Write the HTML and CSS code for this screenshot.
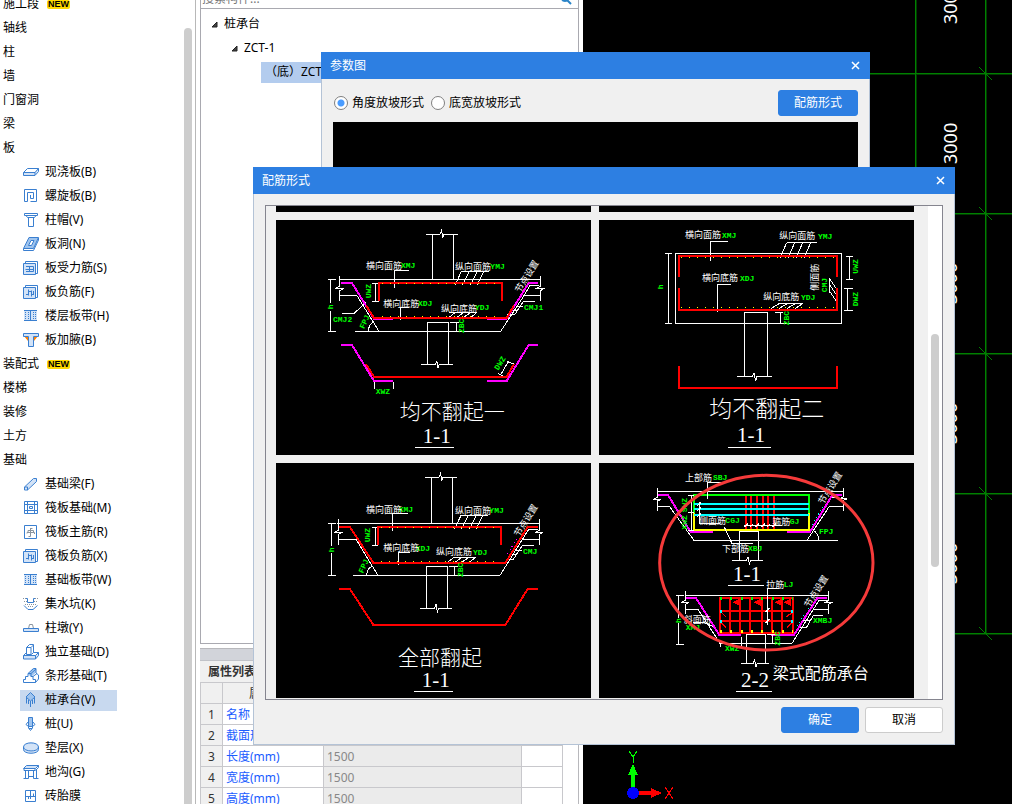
FILE: index.html
```html
<!DOCTYPE html>
<html lang="zh-CN">
<head>
    <meta charset="UTF-8">
    <meta name="viewport" content="width=device-width, initial-scale=1.0">
    <title>配筋形式</title>
    <link rel="stylesheet" href="styles.css">
</head>
<body>
    <div class="app">
        <nav class="sidebar">
            <ul class="nav-list">
                <li><a href="#">施工段</a><span class="badge">NEW</span></li>
                <li><a href="#">轴线</a></li>
                <li><a href="#">柱</a></li>
                <li><a href="#">墙</a></li>
                <li><a href="#">门窗洞</a></li>
                <li><a href="#">梁</a></li>
                <li><a href="#">板</a></li>
                <li class="sub"><a href="#"><svg class="icon" viewBox="0 0 16 16"><path class="fill" d="M1 8H12L15 4V7L12 11H1Z"/><path d="M.5 8.5 4.5 4.5H15.5V7.5L12 11.5H.5ZM.5 8.5H12L15.5 4.5M12 8.5V11"/></svg>现浇板(B)</a></li>
                <li class="sub"><a href="#"><svg class="icon" viewBox="0 0 16 16"><path d="M4.5 13.5H1.5V1.5H13.5V13.5H7.5M4.5 13.5V4.5H10.5V10.5H7.5V7"/></svg>螺旋板(B)</a></li>
                <li class="sub"><a href="#"><svg class="icon" viewBox="0 0 16 16"><path d="M1.5 1.5H14.5V3.5H1.5ZM3 3.5 4.5 5.5H11.5L13 3.5M5.5 5.5V14.5H10.5V5.5"/></svg>柱帽(V)</a></li>
                <li class="sub"><a href="#"><svg class="icon" viewBox="0 0 16 16"><path class="fill dark" d="M.5 12.5 6 1.5H15.5L10.5 12.5Z"/><path d="M.5 12.5 6 1.5H15.5L10.5 12.5ZM.5 12.5V14.5H10.5L15.5 4V2"/><path class="hole" d="M5.5 9.5 8 4.5H11L8.5 9.5Z"/></svg>板洞(N)</a></li>
                <li class="sub"><a href="#"><svg class="icon" viewBox="0 0 16 16"><path class="fill" d="M.5 3.5H12.5V14.5H.5Z"/><path d="M.5 3.5H12.5V14.5H.5ZM2.5 3V1.5H14.5V13.5H13M3 6.5H10.5V11.5H3M2.5 9.5H10M6.5 6.5V12"/></svg>板受力筋(S)</a></li>
                <li class="sub"><a href="#"><svg class="icon" viewBox="0 0 16 16"><path class="fill" d="M.5 3.5H12.5V14.5H.5Z"/><path d="M.5 3.5H12.5V14.5H.5ZM2.5 3V1.5H14.5V13.5H13M5.5 5.5V11.5M8.5 6.5V12.5M3 10.5H5M5 7.5H8M8 10.5H11M10.5 7V11"/></svg>板负筋(F)</a></li>
                <li class="sub"><a href="#"><svg class="icon" viewBox="0 0 16 16"><path class="fill" d="M1 3H14V13H1Z"/><path d="M1 2.5H14M1 12.5H14M7.5 3V12"/><path class="dots" d="M2.5 4V12M5.5 4V12M10.5 4V12M12.5 4V12"/></svg>楼层板带(H)</a></li>
                <li class="sub"><a href="#"><svg class="icon" viewBox="0 0 16 16"><path class="orange" d="M1 4H5V9ZM15 4H11V9Z"/><path class="fill" d="M.5 1.5H15.5V4.5H10.5V14.5H5.5V4.5H.5Z"/><path d="M.5 1.5H15.5V4.5H10.5V14.5H5.5V4.5H.5Z"/></svg>板加腋(B)</a></li>
                <li><a href="#">装配式</a><span class="badge">NEW</span></li>
                <li><a href="#">楼梯</a></li>
                <li><a href="#">装修</a></li>
                <li><a href="#">土方</a></li>
                <li><a href="#">基础</a></li>
                <li class="sub"><a href="#"><svg class="icon" viewBox="0 0 16 16"><path class="fill" d="M1.5 11.5 10.5 2.5H13.5V5.5L4.5 13.5H1.5Z"/><path d="M1.5 11 10.5 2.5H13.5V5.5L4.5 14H1.5ZM1.5 11H4.5V14"/></svg>基础梁(F)</a></li>
                <li class="sub"><a href="#"><svg class="icon" viewBox="0 0 16 16"><path d="M1.5 1.5H14.5V13.5H1.5ZM1.5 4.5H14.5M1.5 10.5H14.5M4.5 1.5V13.5M11.5 1.5V13.5M6.5 6.5H9.5V8.5H6.5Z"/></svg>筏板基础(M)</a></li>
                <li class="sub"><a href="#"><svg class="icon" viewBox="0 0 16 16"><path d="M1.5 1.5H13.5V14.5H1.5Z"/><path class="gray" d="M7.5 4V12.5M5 8V6.5H10.5V8M7.5 4.5H9.5M4 9.5V8.5H11.5V10M5.5 12.5H7.5"/></svg>筏板主筋(R)</a></li>
                <li class="sub"><a href="#"><svg class="icon" viewBox="0 0 16 16"><path class="fill" d="M.5 3.5H12.5V14.5H.5Z"/><path d="M.5 3.5H12.5V14.5H.5ZM2.5 3V1.5H14.5V13.5H13M5.5 5.5V11.5M8.5 6.5V12.5M3 10.5H5M5 7.5H8M8 10.5H11M10.5 7V11"/></svg>筏板负筋(X)</a></li>
                <li class="sub"><a href="#"><svg class="icon" viewBox="0 0 16 16"><path class="fill" d="M1 3H14V13H1Z"/><path d="M1 2.5H14M1 12.5H14M7.5 3V12"/><path class="dots" d="M2.5 4V12M5.5 4V12M10.5 4V12M12.5 4V12"/></svg>基础板带(W)</a></li>
                <li class="sub"><a href="#"><svg class="icon" viewBox="0 0 16 16"><path d="M3 2.5H4.5V6.5H10.5V2.5H12M1 9.5 5 13.5H10L14.5 9.5"/><path class="gray dots" d="M0 2.5H3M12 2.5H15M1 5.5H4M2 8.5H13M5 10.5H11M11 5.5H15"/></svg>集水坑(K)</a></li>
                <li class="sub"><a href="#"><svg class="icon" viewBox="0 0 16 16"><path class="gray" d="M5.5 8.5 6.5 4.5H9.5L10.5 8.5"/><path class="fill" d="M.5 8.5H15.5V11.5H.5Z"/><path d="M.5 8.5H15.5V11.5H.5Z"/></svg>柱墩(Y)</a></li>
                <li class="sub"><a href="#"><svg class="icon" viewBox="0 0 16 16"><path class="fill" d="M.5 11.5H12L15.5 8.5V11.5L12 15H.5Z"/><path d="M.5 11.5H12.5V15H.5ZM.5 11.5 3.5 8.5M12.5 11.5 15.5 8.5V11.5L12.5 15M10.5 8.5H15.5M3.5 10.5V3.5L6.5 .5H10.5V8.5L8.5 10.5ZM8 10V3.5H3.5M8 3.5 10.5 1"/></svg>独立基础(D)</a></li>
                <li class="sub"><a href="#"><svg class="icon" viewBox="0 0 16 16"><path class="fill dark" d="M5 6 10 .5H13V4.5L8 9Z"/><path d="M.5 14.5V11.5H2.5V8.5H5V5.5H8V8.5H10V11.5H12.5V14.5ZM5 5.5 10.5 .5H13V5L15.5 7V11L12.5 14.5M8 5.5 13 1M10 8.5 14 5.5"/></svg>条形基础(T)</a></li>
                <li class="sub"><a class="active" href="#"><svg class="icon" viewBox="0 0 16 16"><path class="fill dark" d="M7.5 .5 12 5 7.5 9 3 5Z"/><path d="M7.5 .5 12 5 7.5 9 3 5ZM7.5 9V15M3.5 6V11.5M11.5 6V11.5M5.5 8V12M9.5 8V12"/></svg>桩承台(V)</a></li>
                <li class="sub"><a href="#"><svg class="icon" viewBox="0 0 16 16"><path class="fill dark" d="M5.5 1.5H9.5V11H5.5Z"/><path d="M5.5 1.5H9.5V10.5H5.5ZM5 6 3 8.5 5.5 10.5V12L7.5 14.5 9.5 12V10.5L12 8.5 10 6M6 12.5H9"/></svg>桩(U)</a></li>
                <li class="sub"><a href="#"><svg class="icon" viewBox="0 0 16 16"><path class="fill" d="M.5 7C.5 1 15.5 1 15.5 7V9.5C15.5 14.5 .5 14.5 .5 9.5Z"/><path d="M.5 7C.5 1.5 15.5 1.5 15.5 7S.5 12 .5 7V9.5C.5 14.5 15.5 14.5 15.5 9.5V7"/></svg>垫层(X)</a></li>
                <li class="sub"><a href="#"><svg class="icon" viewBox="0 0 16 16"><path class="fill" d="M.5 4.5 3.5 1.5H15.5L12.5 4.5Z"/><path d="M.5 4.5 3.5 1.5H15.5L12.5 4.5ZM1 4.5V6.5H12V4.5M12.5 6.5 15.5 3.5V1.5M2.5 6.5V14.5H5.5V6.5M.5 14.5H5M10.5 6.5V14.5H15.5M13.5 6V14M5.5 12.5H10"/></svg>地沟(G)</a></li>
                <li class="sub"><a href="#"><svg class="icon" viewBox="0 0 16 16"><path d="M2.5 2.5H12.5V13.5H2.5ZM2.5 8.5H12.5M7.5 2.5V11M5.5 8.5V11M10.5 5.5V8.5"/></svg>砖胎膜</a></li>
            </ul>
            <div class="nav-scroll"></div>
        </nav>

        <section class="middle">
            <div class="search">
                <input type="text" aria-label="搜索构件" placeholder="搜索构件...">
                <svg class="search-icon" viewBox="0 0 12 12"><circle cx="5" cy="5" r="3"/><path d="M7 7 11 11"/></svg>
            </div>
            <ul class="tree">
                <li class="level-1"><svg class="arrow" viewBox="0 0 7 7"><path d="M6 1V6H1Z"/></svg>桩承台</li>
                <li class="level-2"><svg class="arrow" viewBox="0 0 7 7"><path d="M6 1V6H1Z"/></svg>ZCT-1</li>
                <li class="level-3"><span class="selected">（底）ZCT-1-1</span></li>
            </ul>
            <div class="props">
                <div class="props-bar"></div>
                <h2>属性列表</h2>
                <table>
                    <tr class="head"><th></th><th>属性名称</th><th>属性值</th><th>附加</th></tr>
                    <tr><th>1</th><td>名称</td><td class="value">ZCT-1</td><td></td></tr>
                    <tr><th>2</th><td>截面形状</td><td class="value"></td><td></td></tr>
                    <tr><th>3</th><td>长度(mm)</td><td class="value">1500</td><td></td></tr>
                    <tr><th>4</th><td>宽度(mm)</td><td class="value">1500</td><td></td></tr>
                    <tr><th>5</th><td>高度(mm)</td><td class="value">1500</td><td></td></tr>
                </table>
            </div>
        </section>

        <main class="canvas">
            <svg class="axes">
                <path class="axis-glow" d="M333 0V634M403 0V634M0 74H600M0 214H600M0 354H600M0 494H600M0 634H600"/>
                <path class="axis" d="M332 0V633M402 0V633M0 73H600M0 213H600M0 353H600M0 493H600M0 633H600"/>
                <path class="tick" d="M396 67 409 80M396 207 409 220M396 347 409 360M396 487 409 500M396 627 409 640"/>
                <g class="dim">
                    <text transform="translate(374 24) rotate(-90)">3000</text>
                    <text transform="translate(374 164) rotate(-90)">3000</text>
                    <text transform="translate(374 304) rotate(-90)">3000</text>
                    <text transform="translate(374 444) rotate(-90)">3000</text>
                    <text transform="translate(374 584) rotate(-90)">3000</text>
                </g>
                <path class="y-axis" d="M48 790V775H45L50 764 55 775H52V790Z"/>
                <path class="x-axis" d="M55 791H68V788L79 793 68 798V795H55Z"/>
                <circle class="origin" cx="50" cy="793" r="6"/>
                <path class="y-line" d="M46 751 50 757 54 751M50 757V763"/>
                <path class="x-line" d="M82 787 90 799M90 787 82 799"/>
            </svg>
        </main>

        <section class="dialog params">
            <header>
                <h1>参数图</h1>
                <button class="close" aria-label="关闭"><svg viewBox="0 0 9 9"><path d="M1 1 8 8M8 1 1 8"/></svg></button>
            </header>
            <div class="dialog-body">
                <div class="options">
                    <label><input type="radio" name="slope" checked>角度放坡形式</label>
                    <label><input type="radio" name="slope">底宽放坡形式</label>
                    <button class="btn primary">配筋形式</button>
                </div>
                <div class="preview"></div>
            </div>
        </section>

        <section class="dialog rebar">
            <header>
                <h1>配筋形式</h1>
                <button class="close" aria-label="关闭"><svg viewBox="0 0 9 9"><path d="M1 1 8 8M8 1 1 8"/></svg></button>
            </header>
            <div class="dialog-body">
                <div class="list">
                    <div class="cards">
                        <div class="stub"></div>
                        <div class="stub"></div>

                        <!-- 均不翻起一 -->
                        <svg class="card" viewBox="48 60 945 705">
                            <path d="M498 103H540L545 91 548 114 551 103H594M518 103V238M580 103V238M238 238H842M238 228V259L228 265H252L238 272V303M842 228V258L830 265H852L842 272V303M238 287H291L357 394M285 394H722L790 290 810 257H838M788 287H842"/>
                            <path d="M212 238V308M212 332V394M204 238H228M204 394H228M346 249V305M337 249H357M337 305H357M588 367V394M570 367H598M570 394H612"/>
                            <path d="M446 211H404V264M604 214H686M604 214 586 254M628 214 608 254M652 214 632 254M672 214 652 254M446 322H421V360M567 338H650M585 338 565 354M610 338 588 354M632 338 607 354M650 338 630 354M246 341H281L318 308M325 394Q326 372 342 366M825 304H790L765 343H742M770 318H790M755 330H775"/>
                            <path d="M502 493V367H566V493M483 493H527L530 482 534 503 538 493H579M343 545V566M401 545V566M722 524 745 485M714 520 736 531M740 484 762 492"/>
                            <path class="magenta" d="M243 249H276L342 356H399M834 249H806L740 356H681M243 435H276L342 543H399M834 435H806L740 543H681"/>
                            <path class="red" d="M357 303V249H726V303M318 316 342 354H740L762 316M318 492 342 531H740L762 492"/>
                            <path class="yellow-dots" d="M366 250H720M366 350H724"/>
                            <g class="code">
                                <text x="423" y="204">XMJ</text>
                                <text x="691" y="207">YMJ</text>
                                <text x="474" y="318">XDJ</text>
                                <text x="645" y="330">YDJ</text>
                                <text x="219" y="365">CMJ2</text>
                                <text x="792" y="330">CMJ1</text>
                                <text x="347" y="581">XWZ</text>
                                <text transform="translate(218 328) rotate(-90)">h</text>
                                <text transform="translate(333 295) rotate(-90)">UWZ</text>
                                <text transform="translate(612 399) rotate(-90)">ZBC</text>
                                <text transform="translate(312 388) rotate(-65)">FPJ</text>
                                <text transform="translate(715 512) rotate(-58)">DWZ</text>
                            </g>
                            <g class="note">
                                <text x="318" y="206">横向面筋</text>
                                <text x="585" y="209">纵向面筋</text>
                                <text x="370" y="322">横向底筋</text>
                                <text x="543" y="337">纵向底筋</text>
                                <text transform="translate(780 280) rotate(-58)">节点设置</text>
                            </g>
                            <text class="caption" x="419" y="658">均不翻起一</text>
                            <text class="section" x="530" y="728">1-1</text>
                            <path d="M465 743H582"/>
                        </svg>

                        <!-- 均不翻起二 -->
                        <svg class="card" viewBox="27 60 945 705">
                            <path d="M257 160H755V371H257ZM234 160V371M225 160H245M225 371H245M570 338V371M555 338H580M778 169V237M768 169H789M768 237H789M773 265V331M763 265H789M763 331H789"/>
                            <path d="M414 125H361V182M590 128H680M590 128 570 174M614 128 594 174M638 128 618 174M662 128 642 174M423 253H383V335M719 234V278M719 236 740 268M719 254 740 286M719 274 740 305M565 311H638M567 311 543 326M591 311 567 326M615 311 591 326M638 311 615 326"/>
                            <path d="M464 529V338H533V529M441 529H488L492 518 497 542 501 529H546"/>
                            <path class="red" d="M267 231V168H741V231M267 264V330H741V264M267 498V564H741V498"/>
                            <path class="yellow-dots" d="M273 171H735M273 323H735"/>
                            <g class="code">
                                <text x="396" y="114">XMJ</text>
                                <text x="684" y="117">YMJ</text>
                                <text x="450" y="243">XDJ</text>
                                <text x="633" y="300">YDJ</text>
                                <text transform="translate(218 268) rotate(-90)">h</text>
                                <text transform="translate(712 277) rotate(-90)">CMJ</text>
                                <text transform="translate(597 376) rotate(-90)">ZBC</text>
                                <text transform="translate(804 221) rotate(-90)">UWZ</text>
                                <text transform="translate(804 319) rotate(-90)">DWZ</text>
                            </g>
                            <g class="note">
                                <text x="285" y="115">横向面筋</text>
                                <text x="568" y="118">纵向面筋</text>
                                <text x="336" y="244">横向底筋</text>
                                <text x="520" y="301">纵向底筋</text>
                                <text transform="translate(685 272) rotate(-90)">侧面筋</text>
                            </g>
                            <text class="caption large" x="358" y="650">均不翻起二</text>
                            <text class="section" x="483" y="727">1-1</text>
                            <path d="M415 743H543"/>
                        </svg>

                        <!-- 全部翻起 -->
                        <svg class="card" viewBox="48 24 945 705">
                            <path d="M495 67H537L542 55 545 78 548 67H590M515 67V205M578 67V205M232 205H840M236 193V226L223 232H246L236 238V270M838 193V226L828 232H850L838 238V270M236 253H288L353 360M279 361H720L806 223H835M790 253H840"/>
                            <path d="M214 205V272M214 294V361M204 205H228M204 361H228M346 217V271M335 217H355M335 271H355M584 333V361M567 333H595M567 361H610"/>
                            <path d="M444 175H398V228M601 181H684M603 181 584 221M625 181 605 221M649 181 629 221M669 181 649 221M450 292H415V330M580 307H647M582 307 562 322M605 307 585 322M627 307 605 322M647 307 627 322M320 360Q321 340 338 333M822 271H787L760 313H740M768 285H787M752 297H772"/>
                            <path d="M500 460V334H563V460M480 460H524L528 448 532 471 536 460H576"/>
                            <path class="red" d="M237 216H270L340 324H736L803 216H834M354 270V216H723V270M237 402H270L340 510H736L803 402H834"/>
                            <path class="yellow-dots" d="M362 218H715M362 320H720"/>
                            <path class="magenta-dots" d="M770 252 740 300"/>
                            <g class="code">
                                <text x="416" y="171">XMJ</text>
                                <text x="688" y="173">YMJ</text>
                                <text x="467" y="287">XDJ</text>
                                <text x="639" y="300">YDJ</text>
                                <text x="789" y="297">CMJ</text>
                                <text transform="translate(222 292) rotate(-90)">h</text>
                                <text transform="translate(329 262) rotate(-90)">UWZ</text>
                                <text transform="translate(608 366) rotate(-90)">ZBC</text>
                                <text transform="translate(309 356) rotate(-65)">FPJ</text>
                            </g>
                            <g class="note">
                                <text x="318" y="173">横向面筋</text>
                                <text x="585" y="176">纵向面筋</text>
                                <text x="370" y="289">横向底筋</text>
                                <text x="528" y="301">纵向底筋</text>
                                <text transform="translate(777 247) rotate(-58)">节点设置</text>
                            </g>
                            <text class="caption" x="414" y="629">全部翻起</text>
                            <text class="section" x="527" y="697">1-1</text>
                            <path d="M462 709H579"/>
                        </svg>

                        <!-- 梁式配筋承台 -->
                        <svg class="card" viewBox="-123 -6 945 705">
                            <path class="red" d="M318 90V195M332 90V195M351 90V195M368 90V195M385 90V195M402 90V195"/>
                            <path class="green" d="M162 143V90H508V143"/>
                            <path class="yellow" d="M162 143V195H508V143"/>
                            <path class="cyan" d="M162 117H506M162 132H506M162 150H506"/>
                            <path class="magenta" d="M54 90H84L152 201H219M606 90H577L510 201H441M138 399H168L238 510H303M561 399H532L462 510H394"/>
                            <path d="M52 79H611M52 68V97L42 103H64L52 108V138M611 68V95L598 101H622L611 106V138M52 124H88L162 226H594M501 226 568 124H611M577 96H590"/>
                            <path d="M153 91V195M145 91H162M145 143H162M145 195H162M255 52H203V102M240 175H179V112M172 122 184 112M172 137 184 127M172 155 184 145M311 181H425M313 186 323 176M330 186 340 176M347 186 357 176M364 186 374 176M381 186 391 176M398 186 408 176M253 186 276 236H340M518 195Q535 204 537 226"/>
                            <path d="M298 286V200H355V286M276 286H320L324 275 328 297 332 286H369"/>
                            <path class="red" d="M241 399H460V504H241ZM271 399V504M301 399V504M331 399V504M366 399V504M397 399V504M427 399V504M241 439H460M241 469H460"/>
                            <path class="hook" d="M282 412 298 403V420ZM346 412 362 403V420ZM408 412 424 403V420ZM436 412 452 403V420ZM244 442 258 456M244 474 258 488M456 442 440 456M456 474 440 488"/>
                            <path class="green-dots" d="M240 401H460"/>
                            <path class="yellow-dots wide" d="M240 499H460"/>
                            <path class="cyan-dots" d="M241 439H460M241 469H460"/>
                            <path class="cyan-dots tight" d="M548 125 514 182M505 430 468 490"/>
                            <path d="M136 391H566M136 378V406L126 412H148L136 418V448M566 378V406L556 412H578L566 418V448M136 433H174L240 535H456L537 406H566M520 433H566M115 391V458M115 474V537M108 391H132M108 537H132M417 371H383V480M376 442 388 430M376 474 388 462M550 452H520L500 486H480M490 466H510M160 472H190L218 484M240 535V545M305 515V545M398 510V535M380 508H410"/>
                            <path d="M320 595V508H377V595M302 595H340L344 584 348 606 352 595H386"/>
                            <g class="code">
                                <text x="219" y="46">SBJ</text>
                                <text x="256" y="175">CGJ</text>
                                <text x="449" y="177">GJ</text>
                                <text x="537" y="208">FPJ</text>
                                <text x="324" y="259">XBJ</text>
                                <text x="431" y="367">LJ</text>
                                <text x="137" y="495">XMJ</text>
                                <text x="519" y="474">XMBJ</text>
                                <text x="255" y="557">XWZ</text>
                                <text transform="translate(141 142) rotate(-90)">SWZ</text>
                                <text transform="translate(141 194) rotate(-90)">XWZ</text>
                                <text transform="translate(122 474) rotate(-90)">h</text>
                                <text transform="translate(420 542) rotate(-90)">ZBC</text>
                            </g>
                            <g class="note">
                                <text x="135" y="47">上部筋</text>
                                <text x="177" y="177">侧面筋</text>
                                <text x="397" y="179">箍筋</text>
                                <text x="246" y="261">下部筋</text>
                                <text x="379" y="369">拉筋</text>
                                <text x="131" y="473">斜面筋</text>
                                <text transform="translate(550 120) rotate(-58)">节点设置</text>
                                <text transform="translate(508 430) rotate(-58)">节点设置</text>
                            </g>
                            <text class="section" x="321" y="348">1-1</text>
                            <path d="M264 361H372"/>
                            <text class="section" x="345" y="666">2-2</text>
                            <path d="M289 679H396"/>
                            <text class="title" x="398" y="643">梁式配筋承台</text>
                            <ellipse class="mark" cx="379" cy="293" rx="320" ry="262"/>
                        </svg>
                    </div>
                    <div class="list-scroll"><div class="thumb"></div></div>
                </div>
                <footer>
                    <button class="btn primary">确定</button>
                    <button class="btn">取消</button>
                </footer>
            </div>
        </section>
    </div>
</body>
</html>
```
FILE: styles.css
```css
* {
    box-sizing: border-box;
}

body {
    margin: 0;
    font: 12px/24px "Noto Sans", "Noto Sans CJK SC", sans-serif;
    color: #000;
    background: #fff;
}

ul {
    margin: 0;
    padding: 0;
    list-style: none;
}

h1,
h2 {
    margin: 0;
    font-size: 12px;
    font-weight: normal;
}

button {
    font: inherit;
    cursor: pointer;
}

.app {
    position: relative;
    display: flex;
    height: 100vh;
    overflow: hidden;
}

/* left navigation */
.sidebar {
    display: flex;
    justify-content: space-between;
    width: 196px;
    flex: none;
    border-right: 1px solid #b8b8b8;
}

.nav-list {
    margin-top: -8px;
    padding-left: 3px;
}

.nav-list li {
    display: flex;
    align-items: center;
    height: 24px;
}

.nav-list a {
    display: flex;
    align-items: center;
    height: 21px;
    color: #000;
    text-decoration: none;
    white-space: nowrap;
}

.sub a {
    gap: 6px;
    margin-left: 17px;
    padding: 0 22px 0 3px;
}

.sub a.active {
    background: #c8d9ef;
}

.badge {
    margin-left: 8px;
    padding: 0 1px;
    background: #ffd800;
    border-radius: 2px;
    font: bold 9px/9px "Liberation Sans", sans-serif;
}

.icon {
    width: 16px;
    height: 16px;
    fill: none;
    stroke: #3a7fd0;
}

.icon .fill {
    fill: #d3e3f7;
    stroke: none;
}

.icon .dark {
    fill: #9fc4ee;
}

.icon .hole {
    fill: #fff;
}

.icon .orange {
    fill: #ff8000;
    stroke: none;
}

.icon .gray {
    stroke: #8a949e;
}

.icon .dots {
    stroke-dasharray: 1 1;
}

.nav-scroll {
    width: 8px;
    margin: 28px 3px 0 0;
    background: #cdcdcd;
    border-radius: 4px 4px 0 0;
}

/* component tree and properties */
.middle {
    display: flex;
    flex-direction: column;
    width: 387px;
    flex: none;
    padding: 0 4px;
}

.search {
    display: flex;
    align-items: center;
    height: 19px;
    margin-top: -11px;
    border: 1px solid #a9a9b0;
    border-bottom: 0;
}

.search input {
    flex: 1;
    min-width: 0;
    padding: 0 1px;
    border: 0;
    outline: 0;
    font: inherit;
    line-height: 18px;
}

.search input::placeholder {
    color: #777;
}

.search-icon {
    width: 12px;
    height: 12px;
    margin-right: 6px;
    fill: none;
    stroke: #2a84c8;
    stroke-width: 2;
}

.tree {
    flex: 1;
    padding-top: 3px;
    border: 1px solid #a9a9b0;
}

.tree li {
    display: flex;
    align-items: center;
    height: 24px;
}

.level-1 {
    padding-left: 10px;
}

.level-2 {
    padding-left: 30px;
}

.level-3 {
    padding-left: 60px;
}

.arrow {
    width: 7px;
    height: 7px;
    margin-right: 6px;
    fill: #444;
    stroke: #222;
}

.selected {
    height: 21px;
    padding: 0 6px 0 4px;
    background: #b3ccee;
    line-height: 20px;
}

.props {
    height: 156px;
    margin-top: 4px;
    border: solid #b8b8bc;
    border-width: 1px 1px 0 0;
    overflow: hidden;
}

.props-bar {
    height: 12px;
    background: #d2d4da;
    border-bottom: 1px solid #c0c2c8;
}

.props h2 {
    height: 21px;
    padding-left: 8px;
    background: #f0f0f0;
    color: #333;
    font-weight: bold;
    line-height: 22px;
}

.props table {
    width: 363px;
    border-collapse: collapse;
    table-layout: fixed;
}

.props th,
.props td {
    height: 21px;
    padding: 1px 0 0 3px;
    border: 1px solid #c8c8cc;
    line-height: 19px;
}

.props th {
    width: 198px;
    padding: 1px 0 0;
    background: #f0f0f0;
    color: #333;
    font-weight: normal;
}

.props th:first-child {
    width: 22px;
}

.props th:nth-child(2) {
    width: 101px;
}

.props th:nth-child(4) {
    width: 41px;
}

.props td {
    color: #1a5cff;
}

.props .value {
    background: #ebebeb;
    color: #888;
}

/* drawing area */
.canvas {
    flex: 1;
    min-width: 0;
    background: #000;
}

.axes {
    display: block;
    width: 100%;
    height: 100%;
    fill: none;
    shape-rendering: crispEdges;
}

.axis {
    stroke: #008000;
}

.axis-glow {
    stroke: #003c00;
}

.tick {
    stroke: #008000;
    shape-rendering: auto;
}

.dim {
    fill: #fff;
    font-size: 18px;
}

.y-axis {
    fill: #0f0;
}

.x-axis {
    fill: #f00;
}

.origin {
    fill: #00f;
}

.y-line {
    stroke: #0f0;
}

.x-line {
    stroke: #f00;
}

/* floating windows */
.dialog {
    position: absolute;
}

.params {
    left: 321px;
    top: 52px;
    width: 549px;
}

.rebar {
    left: 253px;
    top: 167px;
    width: 702px;
}

.dialog header {
    display: flex;
    align-items: center;
    justify-content: space-between;
    height: 27px;
    padding: 0 10px 0 9px;
    background: #2d7fe2;
    color: #fff;
}

.close {
    display: flex;
    padding: 0;
    border: 0;
    background: none;
}

.close svg {
    width: 9px;
    height: 9px;
    stroke: #fff;
    stroke-width: 1.5;
}

.dialog-body {
    padding: 11px;
    border: solid #b4c3d6;
    border-width: 0 1px 1px;
    background: #f0f0f0;
}

.options {
    display: flex;
    align-items: center;
    gap: 7px;
    padding-left: 1px;
}

.options label {
    display: flex;
    align-items: center;
    gap: 4px;
}

.options .btn {
    margin-left: auto;
    width: 80px;
}

.options input {
    width: 14px;
    height: 14px;
    margin: 0;
    appearance: none;
    border: 1px solid #808080;
    border-radius: 50%;
    background: #fff;
}

.options input:checked {
    background: radial-gradient(#4a9cff 3px, #fff 4px);
}

.preview {
    height: 500px;
    margin-top: 6px;
    background: #000;
}

.btn {
    width: 78px;
    height: 26px;
    padding: 0;
    border: 1px solid #ccc;
    border-radius: 3px;
    background: #fff;
    line-height: 24px;
}

.btn.primary {
    border-color: #2d7fe2;
    background: #2d7fe2;
    color: #fff;
}

.list {
    display: flex;
    border: 1px solid #85858f;
}

.cards {
    display: grid;
    grid-template-columns: 1fr 1fr;
    gap: 8px;
    flex: 1;
    padding: 0 14px 1px 10px;
}

.stub {
    height: 6px;
    background: #000;
}

.list-scroll {
    width: 14px;
    padding: 128px 3px 0;
    background: #fff;
}

.thumb {
    height: 233px;
    border-radius: 4px;
    background: #cdcdcd;
}

.rebar footer {
    display: flex;
    justify-content: flex-end;
    gap: 6px;
    margin-top: 7px;
}

/* section drawings, three units to the pixel */
.card {
    display: block;
    width: 100%;
    background: #000;
    fill: none;
    stroke: #fff;
    stroke-width: 3;
}

.card path {
    shape-rendering: crispEdges;
}

.card text {
    stroke: none;
    fill: #fff;
}

.card .note {
    font: 27px "Noto Sans CJK SC", sans-serif;
}

.card .code text {
    fill: #0f0;
    font: bold 24px "Liberation Mono", monospace;
}

.card .caption {
    font: 300 63px "Noto Sans CJK SC", sans-serif;
}

.card .caption.large {
    font-size: 69px;
}

.card .section {
    font: 63px "Liberation Serif", serif;
    text-anchor: middle;
}

.card .title {
    font: 48px "Noto Sans CJK SC", sans-serif;
}

.card .red {
    stroke: #f00;
    stroke-width: 6;
}

.card .magenta {
    stroke: #f0f;
    stroke-width: 6;
}

.card .green {
    stroke: #0f0;
    stroke-width: 6;
}

.card .yellow {
    stroke: #ff0;
    stroke-width: 6;
}

.card .cyan {
    stroke: #0ff;
    stroke-width: 6;
}

.card .hook {
    fill: #f00;
    stroke: #f00;
    stroke-width: 4;
}

.card .yellow-dots {
    stroke: #ff0;
    stroke-dasharray: 3 21;
}

.card .wide {
    stroke-width: 9;
    stroke-dasharray: 6 25;
}

.card .green-dots {
    stroke: #0f0;
    stroke-width: 9;
    stroke-dasharray: 6 25;
}

.card .cyan-dots {
    stroke: #0ff;
    stroke-width: 9;
    stroke-dasharray: 6 207;
}

.card .tight {
    stroke-width: 3;
    stroke-dasharray: 3 9;
}

.card .magenta-dots {
    stroke: #f0f;
    stroke-dasharray: 4 8;
}

.card .mark {
    stroke: #f53a3a;
    stroke-width: 9;
}
```
